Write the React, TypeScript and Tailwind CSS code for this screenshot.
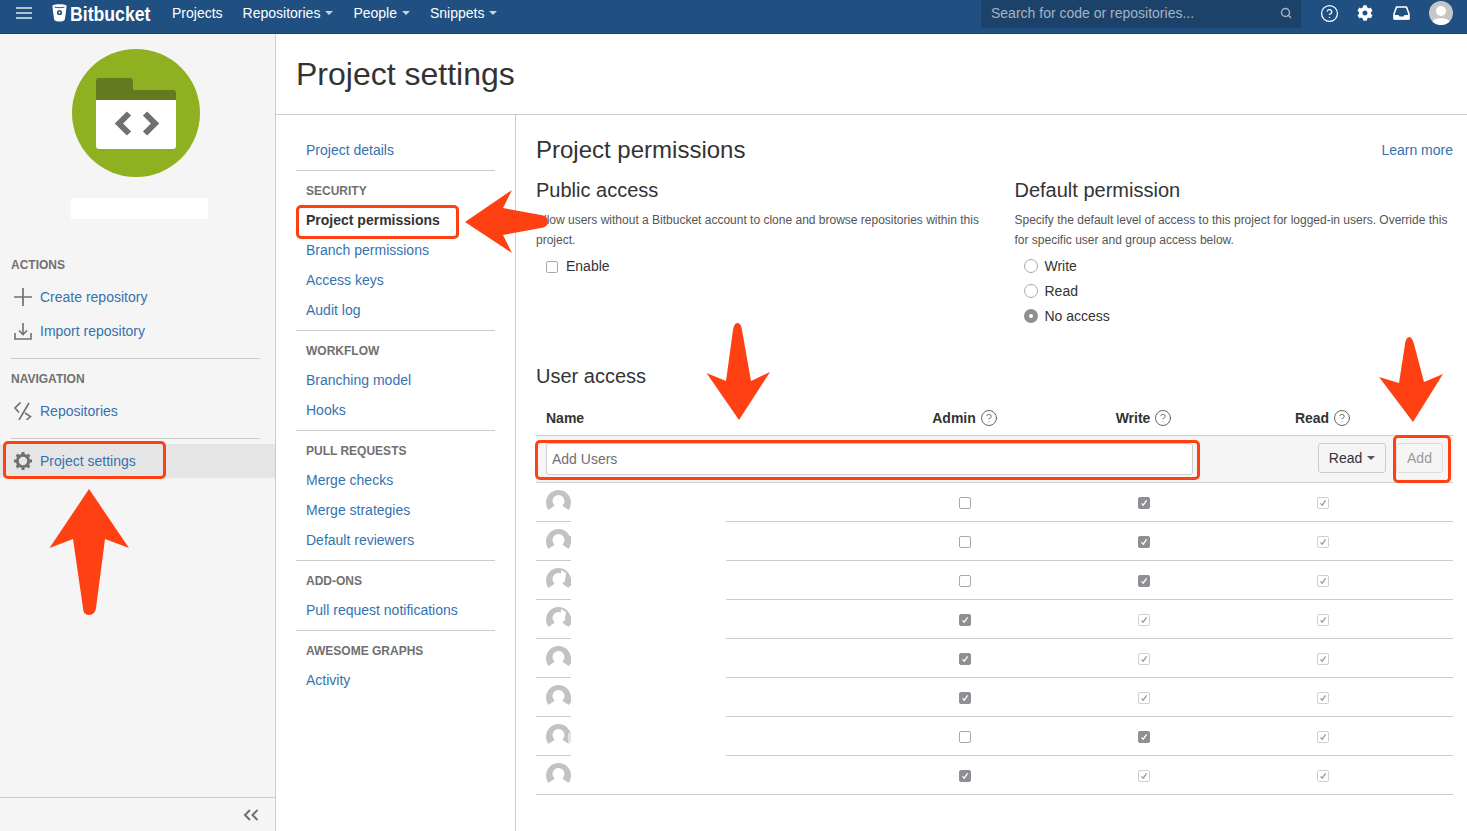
import React from "react";
import { CircleHelp, Search } from "lucide-react";
import { FaCog } from "react-icons/fa";

const Caret = ({ c = "border-t-[#c7d3e0]" }: { c?: string }) => (
  <span className={`ml-[5px] inline-block h-0 w-0 border-x-[4px] border-t-[4px] border-x-transparent ${c}`} />
);

const Section = ({ title, items }: { title: string; items: string[] }) => (
  <div className="border-t border-[#cccccc] pt-[4px] pb-[5px]">
    <div className="flex h-[30px] items-center px-[10px] pt-px text-[12px] font-bold text-[#707070]">{title}</div>
    {items.map((t) => (
      <div key={t} className={`flex h-[30px] items-center px-[10px] ${t === "Project permissions" ? "font-bold text-[#333333]" : "text-[#3572b0]"}`}>
        {t}
      </div>
    ))}
  </div>
);

const Box = ({ kind }: { kind: "empty" | "on" | "off" }) => {
  if (kind === "empty") return <span className="block h-[12px] w-[12px] rounded-[2px] border border-[#a9a9a9] bg-white" />;
  const on = kind === "on";
  return (
    <span className={`flex h-[12px] w-[12px] items-center justify-center rounded-[2px] border ${on ? "border-[#8e8e93] bg-[#8e8e93]" : "border-[#d0d0d0] bg-white"}`}>
      <svg width="8" height="8" viewBox="0 0 8 8" fill="none">
        <path d="M1.5 4.4 L3.2 6.2 L6.6 1.4" stroke={on ? "#ffffff" : "#9a9a9a"} strokeWidth="1.3" />
      </svg>
    </span>
  );
};

const Avatar = ({ v }: { v: number }) => (
  <svg width="25" height="25" viewBox="0 0 25 25" className="block">
    <circle cx="12.5" cy="12.5" r="12.5" fill="#c2c2c2" />
    <circle cx="12.5" cy="11" r="6" fill="#ffffff" />
    <path d="M2.3 20 L9 15.500 L16 15.500 L22.7 20 L22.7 25.5 L2.3 25.5 Z" fill="#ffffff" />
    {v === 2 && <rect x="20" y="7" width="5" height="7" fill="#c2c2c2" />}
    {v === 3 && (
      <g>
        <path d="M15 2 L20 5 L19 14 L15 12 Z" fill="#ffffff" />
        <rect x="19" y="10" width="6" height="8" fill="#c2c2c2" />
      </g>
    )}
    {v === 4 && <path d="M19 12 L25 12 L25 17 L22.5 20 Z" fill="#c2c2c2" />}
    {v === 5 && <rect x="22" y="9" width="3" height="10" fill="#e4e4e4" />}
  </svg>
);

const rows: { a: "empty" | "on" | "off"; w: "empty" | "on" | "off"; v: number; gap: boolean }[] = [
  { a: "empty", w: "on", v: 1, gap: true },
  { a: "empty", w: "on", v: 2, gap: true },
  { a: "empty", w: "on", v: 3, gap: true },
  { a: "on", w: "off", v: 3, gap: true },
  { a: "on", w: "off", v: 4, gap: true },
  { a: "on", w: "off", v: 4, gap: true },
  { a: "empty", w: "on", v: 5, gap: true },
  { a: "on", w: "off", v: 1, gap: false },
];

const cols = "grid grid-cols-[339.5px_179px_179px_179px_1fr]";

const Th = ({ t }: { t: string }) => (
  <div className="flex items-center justify-center gap-[4px] font-bold">
    {t}
    <CircleHelp size={18} strokeWidth={1.2} className="text-[#555555]" />
  </div>
);

const Radio = ({ label, on }: { label: string; on?: boolean }) => (
  <div className="flex h-[25px] items-center pl-[9px]">
    {on ? (
      <span className="-mt-px flex h-[14px] w-[14px] items-center justify-center rounded-full bg-[#8e8e93]">
        <span className="h-[4px] w-[4px] rounded-full bg-white" />
      </span>
    ) : (
      <span className="-mt-px h-[14px] w-[14px] rounded-full border border-[#a9a9a9] bg-white" />
    )}
    <span className="ml-[7px]">{label}</span>
  </div>
);

const SideLink = ({ icon, label, active }: { icon: React.ReactNode; label: string; active?: boolean }) => (
  <div className={`flex h-[34px] items-center pl-[14px] text-[#3572b0] ${active ? "bg-[#e5e5e5]" : ""}`}>
    <span className="flex w-[26px] items-center">{icon}</span>
    {label}
  </div>
);

const Marker = ({ className }: { className: string }) => (
  <div className={`pointer-events-none absolute rounded-[5px] border-[3px] border-[#ff4013] ${className}`} />
);

export default function App() {
  return (
    <div className="relative flex h-[831px] w-[1467px] flex-col overflow-hidden bg-white font-['Liberation_Sans',Arial,sans-serif] text-[14px] text-[#333333]">
      <header className="flex h-[34px] shrink-0 items-center border-b border-[#1c4669] bg-[#205081] pb-[7px] text-white">
        <svg width="16" height="12" viewBox="0 0 16 12" className="ml-[16px]">
          <path d="M0 1 H16 M0 6 H16 M0 11 H16" stroke="#dfe7f0" strokeWidth="1.6" />
        </svg>
        <svg width="15" height="18" viewBox="0 0 15 18" className="ml-[20px]">
          <path d="M0.5 1.5 C3 -0.3 12 -0.3 14.5 1.5 C14.6 3 13.2 14.5 12.6 16 C10.5 18 4.5 18 2.4 16 C1.8 14.5 0.4 3 0.5 1.5 Z" fill="#ffffff" />
          <path d="M2.5 3 C5 3.9 10 3.9 12.5 3" stroke="#205081" strokeWidth="1" fill="none" />
          <circle cx="7.5" cy="8.5" r="2.6" fill="#205081" />
          <circle cx="7.5" cy="8.5" r="1" fill="#ffffff" />
        </svg>
        <span className="ml-[3px] w-[84px] origin-left scale-x-[0.84] text-[21px] leading-none font-bold whitespace-nowrap">Bitbucket</span>
        <span className="ml-[18px]">Projects</span>
        <span className="ml-[20px] flex items-center">Repositories<Caret /></span>
        <span className="ml-[20px] flex items-center">People<Caret /></span>
        <span className="ml-[20px] flex items-center">Snippets<Caret /></span>
        <div className="ml-auto flex h-[28px] w-[320px] items-center justify-between self-start rounded-b-[3px] bg-[#1c4269] pr-[9px] pb-[2px] pl-[10px] text-[#a5b3c4]">
          <span>Search for code or repositories...</span>
          <Search size={12} strokeWidth={3} />
        </div>
        <CircleHelp size={19} strokeWidth={1.6} className="ml-[18.5px]" />
        <FaCog size={16} className="ml-[18.5px]" />
        <svg width="17" height="14" viewBox="0 0 17 14" className="ml-[20px]">
          <path d="M3.5 1 H13.5 L16 8 V13 H1 V8 Z" fill="none" stroke="#ffffff" strokeWidth="1.6" strokeLinejoin="round" />
          <path d="M1 9 H5.5 L6.5 10.5 H10.5 L11.5 9 H16 V13.4 H1 Z" fill="#ffffff" />
        </svg>
        <svg width="24" height="24" viewBox="0 0 24 24" className="mt-[1px] mr-[14px] ml-[19px] self-start">
          <circle cx="12" cy="12" r="12" fill="#c6c6c6" />
          <circle cx="12" cy="10" r="5" fill="#ffffff" />
          <path d="M3.5 20.5 C5 16 19 16 20.5 20.5 C17 25 7 25 3.5 20.5 Z" fill="#ffffff" />
        </svg>
      </header>

      <div className="flex min-h-0 flex-1">
        <aside className="flex w-[276px] shrink-0 flex-col border-r border-[#cccccc] bg-[#f5f5f5]">
          <svg width="128" height="128" viewBox="0 0 128 128" className="mt-[15px] ml-[72px] shrink-0">
            <circle cx="64" cy="64" r="64" fill="#8eb021" />
            <path d="M24 51 V32 Q24 29 27 29 H58 Q61 29 61 32 V41 H101 Q104 41 104 44 V51 Z" fill="#657a1e" />
            <path d="M24 51 H104 V97 Q104 100 101 100 H27 Q24 100 24 97 Z" fill="#ffffff" />
            <path d="M57 64.500 L47 74.500 L57 84.500 M73 64.500 L83 74.500 L73 84.500" fill="none" stroke="#707070" strokeWidth="6" />
          </svg>
          <div className="mt-[21px] ml-[71px] h-[21px] w-[137px] shrink-0 bg-white" />
          <div className="mt-[35px] flex h-[20px] items-center pt-[2px] pl-[11px] text-[12px] font-bold text-[#707070]">ACTIONS</div>
          <div className="mt-[6px]">
            <SideLink
              label="Create repository"
              icon={
                <svg width="18" height="18" viewBox="0 0 18 18" fill="none" stroke="#707070" strokeWidth="1.7">
                  <path d="M9 0 V18 M0 9 H18" />
                </svg>
              }
            />
            <SideLink
              label="Import repository"
              icon={
                <svg width="18" height="18" viewBox="0 0 18 18" fill="none" stroke="#707070" strokeWidth="1.6">
                  <path d="M1 11 V17 H17 V11 M9 1 V12.500 M5 8.500 L9 12.500 L13 8.500" />
                </svg>
              }
            />
          </div>
          <div className="mx-[11px] mt-[10px] w-[249px] border-t border-[#cccccc]" />
          <div className="mt-[9px] flex h-[20px] items-center pt-[2px] pl-[11px] text-[12px] font-bold text-[#707070]">NAVIGATION</div>
          <div className="mt-[6px]">
            <SideLink
              label="Repositories"
              icon={
                <svg width="18" height="18" viewBox="0 0 18 18" fill="none" stroke="#707070" strokeWidth="1.6">
                  <path d="M6.500 0.500 L1 6 L5 10.500 M15 1 L5 18 M11 11 L16.500 14.500 L12.500 18" />
                </svg>
              }
            />
          </div>
          <div className="mx-[11px] mt-[10px] w-[249px] border-t border-[#cccccc]" />
          <div className="mt-[5px]">
            <SideLink
              label="Project settings"
              active
              icon={
                <svg width="18" height="18" viewBox="0 0 18 18" fill="none" stroke="#707070">
                  <circle cx="9" cy="9" r="5.700" strokeWidth="3" />
                  <path strokeWidth="3" d="M9 0 V2.500 M9 15.500 V18 M0 9 H2.500 M15.500 9 H18 M2.640 2.640 L4.400 4.400 M15.360 2.640 L13.600 4.400 M2.640 15.360 L4.400 13.600 M15.360 15.360 L13.600 13.600" />
                </svg>
              }
            />
          </div>
          <div className="mt-auto flex h-[34px] items-center justify-end border-t border-[#cccccc] pr-[16px]">
            <svg width="16" height="12" viewBox="0 0 16 12" fill="none" stroke="#707070" strokeWidth="2">
              <path d="M7 1 L2 6 L7 11 M14.500 1 L9.500 6 L14.500 11" />
            </svg>
          </div>
        </aside>

        <div className="flex min-w-0 flex-1 flex-col">
          <div className="flex h-[81px] shrink-0 items-center border-b border-[#cccccc] pl-[20px] text-[32px]">Project settings</div>
          <div className="flex min-h-0 flex-1">
            <nav className="w-[240px] shrink-0 border-r border-[#cccccc] px-[20px] pt-[20px]">
              <div className="flex h-[30px] items-center px-[10px] text-[#3572b0]">Project details</div>
              <div className="mt-[5px]">
                <Section title="SECURITY" items={["Project permissions", "Branch permissions", "Access keys", "Audit log"]} />
                <Section title="WORKFLOW" items={["Branching model", "Hooks"]} />
                <Section title="PULL REQUESTS" items={["Merge checks", "Merge strategies", "Default reviewers"]} />
                <Section title="ADD-ONS" items={["Pull request notifications"]} />
                <Section title="AWESOME GRAPHS" items={["Activity"]} />
              </div>
            </nav>

            <main className="min-w-0 flex-1 pt-[20px] pr-[14px] pl-[20px]">
              <div className="flex h-[30px] items-center justify-between">
                <h2 className="text-[24px]">Project permissions</h2>
                <span className="text-[#3572b0]">Learn more</span>
              </div>
              <div className="mt-[13px] grid grid-cols-[458.5px_1fr] gap-x-[20px]">
                <div>
                  <h3 className="text-[20px] leading-[24px]">Public access</h3>
                  <p className="mt-[8px] text-[12px] leading-[20px] text-[#555555]">
                    Allow users without a Bitbucket account to clone and browse repositories within this project.
                  </p>
                  <div className="mt-[4px] flex h-[25px] items-center pl-[10px]">
                    <span className="h-[12px] w-[12px] rounded-[2px] border border-[#a9a9a9] bg-white" />
                    <span className="ml-[8px]">Enable</span>
                  </div>
                </div>
                <div>
                  <h3 className="text-[20px] leading-[24px]">Default permission</h3>
                  <p className="mt-[8px] text-[12px] leading-[20px] text-[#555555]">
                    Specify the default level of access to this project for logged-in users. Override this for specific user and group access below.
                  </p>
                  <div className="mt-[4px]">
                    <Radio label="Write" />
                    <Radio label="Read" />
                    <Radio label="No access" on />
                  </div>
                </div>
              </div>

              <h3 className="mt-[35px] text-[20px] leading-[24px]">User access</h3>
              <div className={`${cols} h-[48px] items-end border-b border-[#cccccc] pb-[7px] leading-[20px]`}>
                <div className="pl-[10px] font-bold">Name</div>
                <Th t="Admin" />
                <Th t="Write" />
                <Th t="Read" />
              </div>
              <div className="flex h-[47px] items-start gap-[10px] border-b border-[#cccccc] bg-[#f5f5f5] px-[10px] pt-[7px]">
                <div className="flex h-[32px] w-[647px] items-center rounded-[3px] border border-[#cccccc] bg-white pl-[5px] text-[#707070]">Add Users</div>
                <div className="ml-auto flex h-[30px] w-[68px] items-center justify-center rounded-[3px] border border-[#cccccc] bg-[#f5f5f5]">
                  Read<Caret c="border-t-[#555555]" />
                </div>
                <div className="flex h-[30px] w-[47px] items-center justify-center rounded-[3px] border border-[#dddddd] bg-[#f5f5f5] text-[#999999]">Add</div>
              </div>
              {rows.map((r, i) => (
                <div key={i} className={`${cols} relative h-[39px] items-center border-b border-[#cccccc] pt-[2px]`}>
                  <div className="-mt-[2px] pl-[10px]">
                    <div className="mt-[1px]"><Avatar v={r.v} /></div>
                  </div>
                  <div className="flex justify-center"><Box kind={r.a} /></div>
                  <div className="flex justify-center"><Box kind={r.w} /></div>
                  <div className="flex justify-center"><Box kind="off" /></div>
                  {r.gap && <div className="absolute top-0 -bottom-px left-[35px] w-[155px] bg-white" />}
                </div>
              ))}
            </main>
          </div>
        </div>
      </div>

      <Marker className="top-[205px] left-[296px] h-[34px] w-[163px]" />
      <Marker className="top-[441px] left-[3px] h-[38px] w-[163px]" />
      <Marker className="top-[440px] left-[535px] h-[40px] w-[665px]" />
      <Marker className="top-[435px] left-[1393px] h-[48px] w-[58px]" />
      <svg width="1467" height="831" viewBox="0 0 1467 831" className="pointer-events-none absolute top-0 left-0" fill="#ff4013">
        <path d="M89 489 L129 548 L105 539 L96 608 Q95 615 89 615 Q83 615 83 608 L73 539 L49.500 548 Z" />
        <path d="M739 420 L770 372 L751 381 L742 330 Q741 323 737.500 323 Q734 323 733 330 L726 381 L706.500 373 Z" />
        <path d="M1413 422 L1443 374 L1424 382 L1414 344 Q1412 337 1409.500 337 Q1406 337 1405 344 L1399 383 L1379 377 Z" />
        <path d="M465 222 L512 190 L503 208 L541 215 Q548 216 548 221.500 Q548 227 541 228 L503 235 L512 253 Z" />
      </svg>
    </div>
  );
}
